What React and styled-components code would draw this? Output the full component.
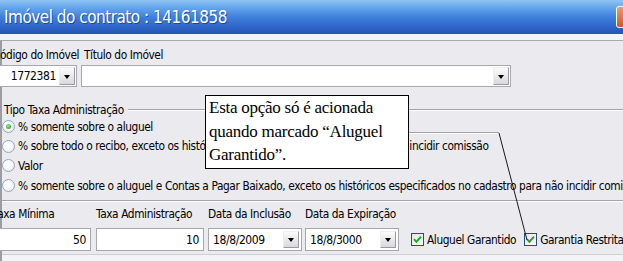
import React from 'react';
import styled, { createGlobalStyle } from 'styled-components';

const Global = createGlobalStyle`
  html, body { margin: 0; padding: 0; background: #ebeaef; }
  body { width: 623px; height: 261px; overflow: hidden; }
`;

const uiFont = `"Liberation Sans Narrow", "DejaVu Sans Condensed", "Liberation Sans", sans-serif`;

const Window = styled.div`
  position: relative;
  width: 623px;
  height: 261px;
  overflow: hidden;
  background: #ebeaef;
  font-family: ${uiFont};
  font-size: 11.8px;
  letter-spacing: -0.4px;
  color: #000;
  display: flex;
  flex-direction: column;
`;

const TitleBar = styled.div`
  height: 34px;
  flex: none;
  display: flex;
  align-items: center;
  justify-content: space-between;
  padding-left: 4px;
  background: linear-gradient(to bottom, #8ec4f3 0%, #66a6ec 22%, #3f80dc 50%, #2f66c8 78%, #2453b2 100%);
  color: #fff;
  font-size: 17px;
  letter-spacing: -0.5px;
  text-shadow: 1px 1px 0 rgba(12, 35, 110, 0.55);
`;

const CloseButton = styled.div`
  width: 20px;
  height: 20px;
  margin-right: -15px;
  border: 1px solid #fff;
  border-radius: 3px;
  background: linear-gradient(to bottom, #ea9a7a, #d4532a);
`;

const TopStrip = styled.div`
  height: 6px;
  flex: none;
  background: #f3f2f6;
  border-bottom: 1px solid #a9a8ae;
`;

const Body = styled.div`
  flex: 1;
  display: flex;
  flex-direction: column;
  border-left: 2px solid #9d9ca2;
  padding-top: 7px;
`;

const Row = styled.div`
  display: flex;
  align-items: flex-end;
`;

const Field = styled.div`
  display: flex;
  flex-direction: column;
  gap: ${p => p.$gap || 3}px;
  width: ${p => p.$w}px;
  margin-left: ${p => p.$shift || 0}px;
  flex: none;
`;

const Label = styled.div`
  height: 14px;
  line-height: 14px;
  white-space: nowrap;
  padding-left: ${p => p.$indent || 0}px;
`;

const Box = styled.div`
  box-sizing: border-box;
  height: ${p => p.$h || 22}px;
  display: flex;
  align-items: center;
  background: #fff;
  border: 1px solid #a8a7ad;
  padding: ${p => p.$pad || 1}px;
`;

const Value = styled.div`
  flex: 1;
  text-align: ${p => (p.$right ? 'right' : 'left')};
  padding: 0 ${p => (p.$right ? 3 : 2)}px;
  white-space: nowrap;
  font-size: 12px;
`;

const DropButton = styled.div`
  box-sizing: border-box;
  width: 16px;
  align-self: stretch;
  display: flex;
  align-items: center;
  justify-content: center;
  background: linear-gradient(to bottom, #fbfbfb, #d9d9dc);
  border: 1px solid;
  border-color: #eeeeee #9a9a9e #9a9a9e #eeeeee;
  border-radius: 1px;
  &::after {
    content: '';
    border-left: 3.5px solid transparent;
    border-right: 3.5px solid transparent;
    border-top: 4px solid #000;
    margin-top: 1px;
  }
`;

const Group = styled.div`
  margin-top: 16px;
  display: flex;
  flex-direction: column;
  border-bottom: 1px solid #fff;
  box-shadow: inset 0 -1px 0 #a3a2a8;
  padding-bottom: 6px;
`;

const Legend = styled.div`
  display: flex;
  align-items: center;
  height: 14px;
  padding-left: 2px;
  gap: 4px;
`;

const EtchedLine = styled.div`
  flex: 1;
  height: 0;
  border-top: 1px solid #a3a2a8;
  border-bottom: 1px solid #fff;
`;

const RadioRow = styled.label`
  display: flex;
  align-items: center;
  height: 19.6px;
  white-space: nowrap;
  gap: 3px;
`;

const RadioCircle = styled.span`
  box-sizing: border-box;
  width: 13px;
  height: 13px;
  flex: none;
  border-radius: 50%;
  border: 1px solid #8fa9c6;
  background: radial-gradient(circle at 40% 35%, #ffffff 30%, #e2e2e6 100%);
  display: flex;
  align-items: center;
  justify-content: center;
  &::after {
    content: '';
    display: ${p => (p.$on ? 'block' : 'none')};
    width: 5px;
    height: 5px;
    border-radius: 50%;
    background: radial-gradient(circle at 40% 35%, #8ee68e, #1f9a1f);
  }
`;

const Bottom = styled.div`
  margin-top: 5px;
  display: flex;
  align-items: flex-end;
`;

const Checks = styled.div`
  display: flex;
  align-items: center;
  gap: 8px;
  height: 23px;
  margin-left: 12px;
`;

const CheckRow = styled.label`
  display: flex;
  align-items: center;
  gap: 3px;
  white-space: nowrap;
`;

const CheckBox = styled.span`
  box-sizing: border-box;
  width: 13px;
  height: 13px;
  flex: none;
  border: 1px solid #1c5180;
  background: linear-gradient(135deg, #e6e6e0, #ffffff);
  display: flex;
  align-items: center;
  justify-content: center;
`;

const Footer = styled.div`
  flex: 1;
  margin-top: 3px;
  background: #f4f3f7;
  border-top: 1px solid #cfced4;
`;

const Callout = styled.div`
  position: absolute;
  left: 205px;
  top: 95px;
  width: 204px;
  height: 74px;
  box-sizing: border-box;
  border: 1px solid #000;
  background: #fff;
  padding: 0 0 0 3px;
  font-family: "Liberation Serif", "Times New Roman", serif;
  font-size: 17px;
  letter-spacing: -0.25px;
  line-height: 23.5px;
  color: #000;
  z-index: 2;
`;

const Pointer = styled.svg`
  position: absolute;
  left: 0;
  top: 0;
  width: 623px;
  height: 261px;
  pointer-events: none;
  z-index: 1;
`;

const Check = () => (
  <CheckBox>
    <svg width="9" height="9" viewBox="0 0 9 9">
      <path d="M1 4.2 L3.4 6.8 L8 1.6" fill="none" stroke="#21a121" strokeWidth="1.9" />
    </svg>
  </CheckBox>
);

const radios = [
  { on: true, text: '% somente sobre o aluguel' },
  { text: '% sobre todo o recibo, exceto os históricos especificados no cadastro para não incidir comissão' },
  { text: 'Valor' },
  { text: '% somente sobre o aluguel e Contas a Pagar Baixado, exceto os históricos especificados no cadastro para não incidir comissão' },
];

export default function App() {
  return (
    <>
      <Global />
      <Window>
        <TitleBar>
          <span>Imóvel do contrato : 14161858</span>
          <CloseButton />
        </TitleBar>
        <TopStrip />
        <Body>
          <Row>
            <Field $w={84} $shift={-9}>
              <Label>Código do Imóvel</Label>
              <Box>
                <Value $right>1772381</Value>
                <DropButton />
              </Box>
            </Field>
            <Field $w={430} $shift={4}>
              <Label $indent={3}>Título do Imóvel</Label>
              <Box>
                <Value />
                <DropButton />
              </Box>
            </Field>
          </Row>

          <Group>
            <Legend>
              <span>Tipo Taxa Administração</span>
              <EtchedLine />
            </Legend>
            {radios.map((r, i) => (
              <RadioRow key={i}>
                <RadioCircle $on={r.on} />
                <span>{r.text}</span>
              </RadioRow>
            ))}
          </Group>

          <Bottom>
            <Field $w={98} $shift={-9} $gap={7}>
              <Label>Taxa Mínima</Label>
              <Box $h={23}>
                <Value $right>50</Value>
              </Box>
            </Field>
            <Field $w={108} $shift={5} $gap={7}>
              <Label>Taxa Administração</Label>
              <Box $h={23}>
                <Value $right>10</Value>
              </Box>
            </Field>
            <Field $w={94} $shift={4} $gap={7}>
              <Label>Data da Inclusão</Label>
              <Box $h={23} $pad={2}>
                <Value>18/8/2009</Value>
                <DropButton />
              </Box>
            </Field>
            <Field $w={94} $shift={3} $gap={7}>
              <Label>Data da Expiração</Label>
              <Box $h={23} $pad={2}>
                <Value>18/8/3000</Value>
                <DropButton />
              </Box>
            </Field>
            <Checks>
              <CheckRow>
                <Check />
                <span>Aluguel Garantido</span>
              </CheckRow>
              <CheckRow>
                <Check />
                <span>Garantia Restrita</span>
              </CheckRow>
            </Checks>
          </Bottom>
          <Footer />
        </Body>

        <Pointer viewBox="0 0 623 261">
          <line x1="405" y1="132.5" x2="499" y2="132.5" stroke="#a3a2a8" strokeWidth="1" />
          <line x1="405" y1="133.5" x2="499" y2="133.5" stroke="#ffffff" strokeWidth="1" />
          <line x1="499" y1="133" x2="527" y2="240" stroke="#1a1a1a" strokeWidth="1" />
        </Pointer>
        <Callout>
          Esta opção só é acionada
          <br />
          quando marcado “Aluguel
          <br />
          Garantido”.
        </Callout>
      </Window>
    </>
  );
}
